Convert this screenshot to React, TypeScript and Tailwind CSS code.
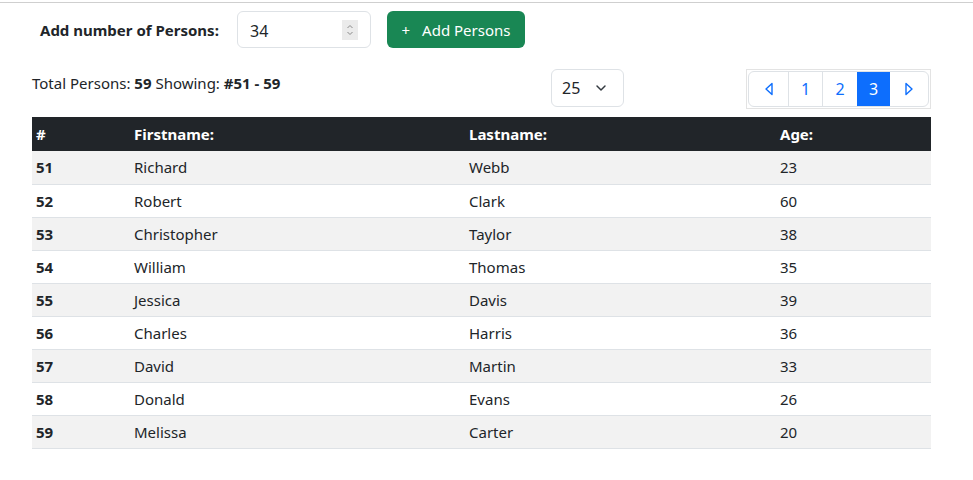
import { ChevronDown } from 'lucide-react';

const persons = [
  { id: 51, first: 'Richard', last: 'Webb', age: 23 },
  { id: 52, first: 'Robert', last: 'Clark', age: 60 },
  { id: 53, first: 'Christopher', last: 'Taylor', age: 38 },
  { id: 54, first: 'William', last: 'Thomas', age: 35 },
  { id: 55, first: 'Jessica', last: 'Davis', age: 39 },
  { id: 56, first: 'Charles', last: 'Harris', age: 36 },
  { id: 57, first: 'David', last: 'Martin', age: 33 },
  { id: 58, first: 'Donald', last: 'Evans', age: 26 },
  { id: 59, first: 'Melissa', last: 'Carter', age: 20 },
];

function Caret({ dir }: { dir: 'left' | 'right' }) {
  return (
    <svg width="10" height="14" viewBox="0 0 10 14" fill="none" stroke="#0d6efd" strokeWidth="1.4" strokeLinejoin="round">
      {dir === 'left' ? <path d="M8 1.5 L2 7 L8 12.5 Z" /> : <path d="M2 1.5 L8 7 L2 12.5 Z" />}
    </svg>
  );
}

export default function App() {
  return (
    <div className="min-h-[480px] bg-white text-[#212529] text-[15px] leading-6" style={{ fontFamily: '"Noto Sans", "Open Sans", sans-serif' }}>
      <div className="border-t border-[#cfcfcf] mt-[2px]" />

      {/* Add form */}
      <div className="flex items-center h-[37px] mt-[8px]">
        <label className="ml-[40px] w-[197px] font-bold text-[15px]">Add number of Persons:</label>
        <div className="w-[134px] h-[37px] border border-[#dee2e6] rounded-[6px] flex items-center pl-[12px] pr-[12px] text-[16px]">
          <span className="flex-1 mt-[2px]">34</span>
          <div className="w-[16px] h-[20px] bg-[#ebebeb] flex flex-col items-center justify-center">
            <svg width="8" height="14" viewBox="0 0 8 14" fill="none" stroke="#8a8a8a" strokeWidth="1">
              <path d="M1.5 5 L4 2.5 L6.5 5" />
              <path d="M1.5 9 L4 11.5 L6.5 9" />
            </svg>
          </div>
        </div>
        <button className="ml-[16px] w-[138px] h-[37px] bg-[#198754] text-white rounded-[6px] flex items-center justify-center gap-[12px] text-[15px]">
          <span>+</span>
          <span>Add Persons</span>
        </button>
      </div>

      {/* Info + controls */}
      <div className="flex items-start mt-[21px] ml-[32px] w-[899px]">
        <div className="w-[519px] mt-[2px]">
          Total Persons: <b>59</b> Showing: <b>#51 - 59</b>
        </div>
        <div className="w-[73px] h-[38px] border border-[#dee2e6] rounded-[6px] flex items-center pl-[10px] pr-[14px] justify-between text-[16px]">
          <span>25</span>
          <ChevronDown size={16} strokeWidth={2.2} className="text-[#343a40]" />
        </div>
        <div className="ml-auto border border-[#e3e3e3] p-px">
          <div className="flex h-[36px] border border-[#dee2e6] rounded-[6px] overflow-hidden text-[#0d6efd] text-[16px]">
            <div className="w-[40px] flex items-center justify-center border-r border-[#dee2e6]"><Caret dir="left" /></div>
            <div className="w-[34px] flex items-center justify-center border-r border-[#dee2e6]">1</div>
            <div className="w-[34px] flex items-center justify-center">2</div>
            <div className="w-[33px] flex items-center justify-center bg-[#0d6efd] text-white">3</div>
            <div className="w-[38px] flex items-center justify-center"><Caret dir="right" /></div>
          </div>
        </div>
      </div>

      {/* Table */}
      <table className="ml-[32px] mt-[8px] w-[899px] border-collapse text-left">
        <thead>
          <tr className="bg-[#212529] text-white font-bold text-[15px]">
            <th className="w-[98px] h-[34px] px-[4px]">#</th>
            <th className="w-[335px] px-[4px]">Firstname:</th>
            <th className="w-[311px] px-[4px]">Lastname:</th>
            <th className="px-[4px]">Age:</th>
          </tr>
        </thead>
        <tbody>
          {persons.map((p, i) => (
            <tr key={p.id} className={`border-b border-[#dee2e6] ${i % 2 === 0 ? 'bg-[#f2f2f2]' : 'bg-white'}`}>
              <td className="h-[33px] px-[4px] font-bold">{p.id}</td>
              <td className="px-[4px]">{p.first}</td>
              <td className="px-[4px]">{p.last}</td>
              <td className="px-[4px]">{p.age}</td>
            </tr>
          ))}
        </tbody>
      </table>
    </div>
  );
}
